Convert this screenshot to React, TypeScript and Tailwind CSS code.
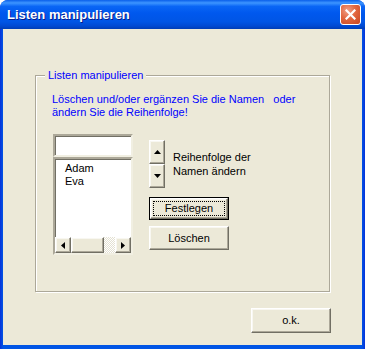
import React from "react";

const raised =
  "border border-t-white border-l-white border-r-[#716F64] border-b-[#716F64] shadow-[inset_-1px_-1px_0_#ACA899,inset_1px_1px_0_#F8F7F1] bg-[#ECE9D8]";
const sunken =
  "border-2 border-t-[#ACA899] border-l-[#ACA899] border-r-[#F1EFE2] border-b-[#F1EFE2] shadow-[inset_1px_1px_0_#716F64] bg-white";

function Tri({ dir, w = 7, h = 4 }: { dir: "up" | "down" | "left" | "right"; w?: number; h?: number }) {
  const pts = {
    up: `0,${h} ${w / 2},0 ${w},${h}`,
    down: `0,0 ${w},0 ${w / 2},${h}`,
    left: `${w},0 ${w},${h} 0,${h / 2}`,
    right: `0,0 ${w},${h / 2} 0,${h}`,
  }[dir];
  return (
    <svg width={w} height={h} viewBox={`0 0 ${w} ${h}`} className="block">
      <polygon points={pts} fill="#000" />
    </svg>
  );
}

function ArrowBtn({ dir, className = "" }: { dir: "up" | "down" | "left" | "right"; className?: string }) {
  const horiz = dir === "left" || dir === "right";
  return (
    <div className={`${raised} flex items-center justify-center ${className}`}>
      {horiz ? <Tri dir={dir} w={4} h={7} /> : <Tri dir={dir} w={7} h={4} />}
    </div>
  );
}

export default function App() {
  return (
    <div className="w-[365px] h-[349px] bg-white font-['Liberation_Sans',Arial,sans-serif] text-[11px] leading-[13px]">
      <div className="flex h-full flex-col overflow-hidden rounded-t-[8px] bg-[linear-gradient(to_right,#0831D9_0px,#0055E5_3px,#0055E5_362px,#0831D9_365px)]">
        {/* title bar */}
        <div className="flex h-[29px] shrink-0 items-center justify-between bg-[linear-gradient(to_bottom,#0A5FEA_0%,#3D95FF_10%,#0A66F5_22%,#0058EE_45%,#0055E5_75%,#0049D2_90%,#003DB5_100%)] pl-[7px] pr-[4px]">
          <span className="font-['Liberation_Sans',Arial,sans-serif] text-[13px] font-bold text-white [text-shadow:1px_1px_0_#0A1C8A]">
            Listen manipulieren
          </span>
          <div className="flex h-[21px] w-[21px] items-center justify-center rounded-[3px] border border-white bg-[radial-gradient(circle_at_35%_30%,#F0A088_0%,#E2673F_45%,#C94520_100%)]">
            <svg width="11" height="11" viewBox="0 0 11 11">
              <path d="M1.5 1.5 L9.5 9.5 M9.5 1.5 L1.5 9.5" stroke="#fff" strokeWidth="2.2" strokeLinecap="square" />
            </svg>
          </div>
        </div>

        {/* body */}
        <div className="mx-[3px] mb-[4px] flex flex-1 flex-col bg-[#ECE9D8] pl-[32px] pt-[46px]">
          <div className="relative h-[217px] w-[295px] border border-[#ACA899] shadow-[inset_1px_1px_0_#fff,1px_1px_0_#fff]">
            <span className="absolute left-[9px] -top-[7px] bg-[#ECE9D8] px-[3px] text-[#0000FF]">
              Listen manipulieren
            </span>

            <div className="pl-[16px] pt-[17px]">
              <p className="whitespace-pre text-[#0000FF]">
                {"Löschen und/oder ergänzen Sie die Namen   oder\nändern Sie die Reihenfolge!"}
              </p>

              <div className="mt-[15px] flex">
                {/* list column */}
                <div className="ml-[1px] flex w-[80px] flex-col">
                  <div className={`${sunken} h-[23px]`} />
                  <div className={`${sunken} flex h-[98px] flex-col`}>
                    <div className="flex-1 pl-[10px] pt-[3px] text-black">
                      <div>Adam</div>
                      <div>Eva</div>
                    </div>
                    <div className="flex h-[16px]">
                      <ArrowBtn dir="left" className="w-[16px]" />
                      <div className={`${raised} w-[33px]`} />
                      <div className="flex-1 bg-[repeating-conic-gradient(#fff_0%_25%,#E4E1D2_0%_50%)] bg-size-[2px_2px]" />
                      <ArrowBtn dir="right" className="w-[16px]" />
                    </div>
                  </div>
                </div>

                {/* right column */}
                <div className="ml-[16px] flex flex-col pt-[6px]">
                  <div className="flex items-center">
                    <div className="flex w-[16px] flex-col">
                      <ArrowBtn dir="up" className="h-[24px]" />
                      <ArrowBtn dir="down" className="h-[24px]" />
                    </div>
                    <div className="ml-[8px] leading-[14px] text-black">
                      Reihenfolge der
                      <br />
                      Namen ändern
                    </div>
                  </div>

                  <div className="mt-[9px] h-[23px] w-[80px] border border-black">
                    <div className={`${raised} flex h-full items-center justify-center p-[2px]`}>
                      <div className="flex h-full w-full items-center justify-center border border-dotted border-black text-black">
                        Festlegen
                      </div>
                    </div>
                  </div>

                  <button className={`${raised} mt-[6px] flex h-[24px] w-[80px] items-center justify-center text-black`}>
                    Löschen
                  </button>
                </div>
              </div>
            </div>
          </div>

          <button className={`${raised} ml-[216px] mt-[16px] flex h-[25px] w-[80px] items-center justify-center text-black`}>
            o.k.
          </button>
        </div>
      </div>
    </div>
  );
}
